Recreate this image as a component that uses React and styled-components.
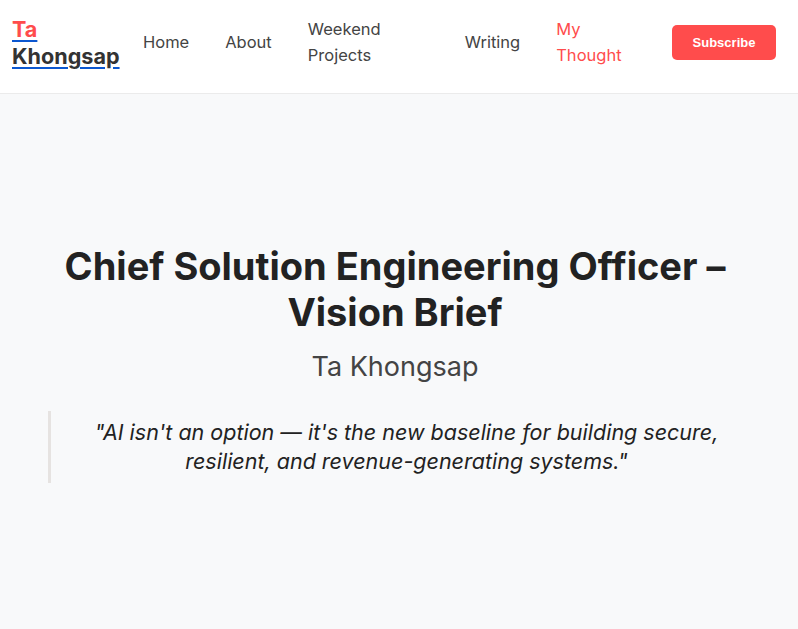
import React from 'react'
import styled, { createGlobalStyle } from 'styled-components'

const GlobalStyle = createGlobalStyle`
  html, body {
    margin: 0;
    padding: 0;
    background: #f8f9fa;
  }
  body {
    font-family: Inter, "Noto Sans", sans-serif;
    color: #222;
  }
`

const Header = styled.header`
  height: 94px;
  box-sizing: border-box;
  background: #fff;
  border-bottom: 1px solid #ebebeb;
  display: flex;
  align-items: center;
  padding: 0 22px 10px 12px;
`

const Logo = styled.a`
  font-size: 21.6px;
  font-weight: 700;
  line-height: 27px;
  margin-top: 3px;
  color: #0b57d0;
  text-decoration: underline;
  text-underline-offset: 3px;
  width: 110px;
  flex-shrink: 0;
`

const LogoPart = styled.span`
  color: ${p => (p.accent ? '#ff4c4c' : '#333')};
`

const Nav = styled.nav`
  display: flex;
  align-items: center;
  gap: 36px;
  margin-left: 21px;
  flex: 1;
`

const NavLink = styled.a`
  font-size: 16.5px;
  line-height: 26px;
  color: ${p => (p.active ? '#ff4c4c' : '#444')};
  text-decoration: none;
  width: ${p => p.w || 'auto'};
`

const Subscribe = styled.button`
  margin-left: auto;
  margin-top: 1px;
  width: 104px;
  height: 35px;
  border: none;
  border-radius: 5px;
  background: #ff4c4c;
  color: #fff;
  font-family: "Liberation Sans", Arial, sans-serif;
  font-size: 13px;
  font-weight: 700;
`

const Main = styled.main`
  padding: 149px 52px 0 44px;
  text-align: center;
`

const Title = styled.h1`
  margin: 0;
  font-size: 38px;
  line-height: 46px;
  font-weight: 700;
  color: #222;
`

const Author = styled.p`
  margin: 15px 0 0;
  font-size: 27px;
  line-height: 34px;
  color: #444;
`

const Quote = styled.blockquote`
  margin: 27px 0 0 4px;
  padding: 7px 14px 7px 30px;
  border-left: 3px solid #e6e3e1;
  font-size: 21.5px;
  line-height: 29px;
  font-style: italic;
  color: #222;
`

export default function App() {
  return (
    <>
      <GlobalStyle />
      <Header>
        <Logo href="#">
          <LogoPart accent>Ta</LogoPart> <LogoPart>Khongsap</LogoPart>
        </Logo>
        <Nav>
          <NavLink href="#">Home</NavLink>
          <NavLink href="#">About</NavLink>
          <NavLink href="#" w="121px">Weekend Projects</NavLink>
          <NavLink href="#">Writing</NavLink>
          <NavLink href="#" active w="80px">My Thought</NavLink>
        </Nav>
        <Subscribe>Subscribe</Subscribe>
      </Header>
      <Main>
        <Title>Chief Solution Engineering Officer – Vision Brief</Title>
        <Author>Ta Khongsap</Author>
        <Quote>
          "AI isn't an option — it's the new baseline for building secure, resilient, and
          revenue-generating systems."
        </Quote>
      </Main>
    </>
  )
}
